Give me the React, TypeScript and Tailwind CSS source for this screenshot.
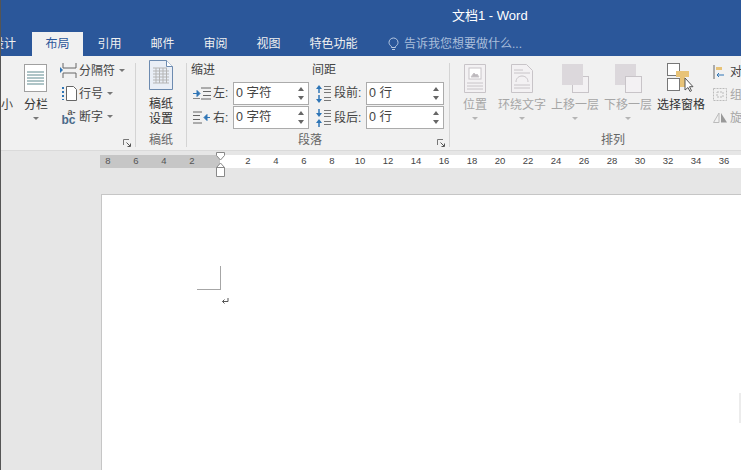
const Caret = ({ c = "#777" }: { c?: string }) => (
  <svg width="6" height="3" viewBox="0 0 6 3" className="shrink-0"><path d="M0 0h6L3 3z" fill={c} /></svg>
);

const Launcher = () => (
  <svg width="9" height="9" viewBox="0 0 9 9" fill="none" stroke="#777" strokeWidth="1">
    <path d="M.5 6V.5H6" /><path d="M3.5 3.5L7 7M7.5 4.500v3h-3" stroke="#555" />
  </svg>
);

const Spinner = ({ text, w }: { text: string; w: string }) => (
  <div className={`flex h-[23px] ${w} items-center justify-between border border-[#ababab] bg-white pl-[2px] pr-[4px] text-[12.5px] text-[#444]`}>
    <span>{text}</span>
    <span className="flex flex-col gap-[5px]">
      <svg width="6" height="4" viewBox="0 0 6 4"><path d="M0 4h6L3 0z" fill="#666" /></svg>
      <svg width="6" height="4" viewBox="0 0 6 4"><path d="M0 0h6L3 4z" fill="#666" /></svg>
    </span>
  </div>
);

const IndentIcon = ({ right }: { right?: boolean }) => (
  <svg width="18" height="15" viewBox="0 0 18 15" fill="none">
    <path d={right ? "M0 2h9M0 5.500h7M0 9.500h7M0 13h9" : "M8 2h10M10 5.500h8M10 9.500h8M8 13h10"} stroke="#666" />
    {right
      ? <path d="M17 7.500h-5M14 4.500l-3 3 3 3z" stroke="#2e75b6" fill="#2e75b6" />
      : <path d="M0 7.500h5M4 4.500l3 3-3 3z" stroke="#2e75b6" fill="#2e75b6" />}
    {!right && <path d="M0 12.500h7" stroke="#888" />}
  </svg>
);

const SpacingIcon = ({ after }: { after?: boolean }) => (
  <svg width="17" height="20" viewBox="0 0 17 20" fill="none">
    <path d="M9 2.500h7M9 5.500h7M9 8.500h7M9 13.500h7M9 16.500h7" stroke="#777" />
    {after ? (
      <>
        <path d="M4 1v6" stroke="#2e75b6" strokeWidth="1.500" /><path d="M1 5h6L4 9z" fill="#2e75b6" />
        <path d="M4 19v-6" stroke="#2e75b6" strokeWidth="1.500" /><path d="M1 15h6L4 11z" fill="#2e75b6" />
      </>
    ) : (
      <>
        <path d="M4 9V3" stroke="#2e75b6" strokeWidth="1.500" /><path d="M1 5h6L4 1z" fill="#2e75b6" />
        <path d="M4 11v6" stroke="#2e75b6" strokeWidth="1.500" /><path d="M1 15h6L4 19z" fill="#2e75b6" />
      </>
    )}
  </svg>
);

const ColumnsIcon = () => (
  <svg width="24" height="29" viewBox="0 0 24 29" fill="none">
    <rect x=".5" y=".5" width="22" height="27" fill="#fff" stroke="#a0a0a0" />
    <path d="M3 8h17M3 11h17M3 14h17M3 17h17M3 20h17" stroke="#5f8a8f" />
  </svg>
);

const PaperIcon = () => (
  <svg width="24" height="30" viewBox="0 0 24 30" fill="none">
    <path d="M.5.500h17l6 6v23H.500z" fill="#e9eef6" stroke="#6d8bb0" />
    <path d="M17.500.500v6h6" fill="#fff" stroke="#6d8bb0" />
    <path d="M4 8h14M4 11h16M4 14h16M4 17h16M4 20h16M4 23h16M7 8v15M10.500 8v15M14 8v15M17.500 8v15" stroke="#b5b5b5" />
  </svg>
);

const DocWrapIcon = ({ wrap }: { wrap?: boolean }) => (
  <svg width="22" height="29" viewBox="0 0 22 29" fill="none" stroke="#c8c4c8">
    <path d={wrap ? "M.5.500h15l6 6v22H.500z" : "M.5.500h21v28H.500z"} fill="#f3f1f3" />
    {wrap ? (
      <path d="M3 6h9M3 9h16M3 21h16M3 24h16M5 18c0-8 12-8 12 0" />
    ) : (
      <>
        <path d="M3 19h16M3 22h16M3 25h16" />
        <rect x="5" y="4" width="12" height="11" fill="#fff" />
        <path d="M7 13l3-4 2 2 1-1 2 3z" fill="#bcb8bc" />
      </>
    )}
  </svg>
);

const LayerIcon = ({ front }: { front?: boolean }) => (
  <svg width="27" height="29" viewBox="0 0 27 29" fill="none">
    {front ? (
      <>
        <rect x="10.500" y="12.500" width="16" height="16" fill="#f3f1f3" stroke="#c8c4c8" />
        <rect x="0" y="0" width="21" height="21" fill="#dcd8dc" />
      </>
    ) : (
      <>
        <rect x="0" y="0" width="21" height="21" fill="#dcd8dc" />
        <rect x="10.500" y="12.500" width="16" height="16" fill="#f3f1f3" stroke="#c8c4c8" />
      </>
    )}
  </svg>
);

const PaneIcon = () => (
  <svg width="28" height="30" viewBox="0 0 28 30" fill="none">
    <rect x=".5" y=".5" width="12" height="12" fill="#fff" stroke="#777" />
    <rect x=".5" y="15.500" width="12" height="12" fill="#fff" stroke="#777" />
    <path d="M9 8h13v6h-4v10h-5V14H9z" fill="#e8c377" />
    <path d="M18 15v12l3-2.500 2 4 1.500-.8-2-4h3.500z" fill="#fff" stroke="#555" />
  </svg>
);

const SmallRow = ({ icon, label }: { icon: React.ReactNode; label: string }) => (
  <div className="flex h-[23px] items-center">
    <span className="flex w-[19px] justify-center">{icon}</span>
    <span className="ml-[1px] text-[12px] text-[#444]">{label}</span>
    <span className="ml-[4px]"><Caret /></span>
  </div>
);

const BigButton = ({ icon, label, w, muted, caret = true }: { icon: React.ReactNode; label: string; w: string; muted?: boolean; caret?: boolean }) => (
  <div className={`flex flex-col items-center ${w}`}>
    <div className="flex h-[33px] items-end">{icon}</div>
    <div className={`mt-[4px] whitespace-nowrap text-[12px] leading-[17px] ${muted ? "text-[#a6a6a6]" : "text-[#333]"}`}>{label}</div>
    {caret && <div className="flex h-[8px] items-center"><Caret c={muted ? "#b5b5b5" : "#777"} /></div>}
  </div>
);

const Sep = () => <div className="my-[3px] w-px shrink-0 bg-[#d4d4d4]" />;

const Group = ({ children, title, w, launcher, pr = "" }: { children: React.ReactNode; title: string; w: string; launcher?: boolean; pr?: string }) => (
  <div className={`flex h-full shrink-0 flex-col ${w}`}>
    <div className="min-h-0 flex-1">{children}</div>
    <div className={`relative flex h-[20px] items-center justify-center text-[12px] text-[#666] ${pr}`}>
      {title}
      {launcher && <span className="absolute bottom-[2px] right-[3px] flex"><Launcher /></span>}
    </div>
  </div>
);

const tabs = [
  { t: "布局", w: "w-[51px]", active: true },
  { t: "引用", w: "w-[53px]" },
  { t: "邮件", w: "w-[53px]" },
  { t: "审阅", w: "w-[53px]" },
  { t: "视图", w: "w-[53px]" },
  { t: "特色功能", w: "w-[77px]" },
];

const rulerDark = ["8", "6", "4", "2"];
const rulerLight = ["2", "4", "6", "8", "10", "12", "14", "16", "18", "20", "22", "24", "26", "28", "30", "32", "34", "36"];

export default function App() {
  return (
    <div className="relative flex h-[470px] w-[741px] flex-col overflow-hidden border-l border-[#555] bg-[#e6e6e6]" style={{ fontFamily: '"Liberation Sans", "Noto Sans CJK SC", sans-serif' }}>
      <header className="flex h-[56px] shrink-0 flex-col bg-[#2b579a] text-white">
        <div className="flex h-[32px] items-center pl-[451px] text-[13px]">文档1 - Word</div>
        <nav className="flex h-[24px] items-stretch text-[12px]">
          <div className="flex w-[31px] items-center justify-end overflow-hidden whitespace-nowrap pr-[16px] text-[#f0f0f0]"><span className="shrink-0">设计</span></div>
          {tabs.map((x) => (
            <div key={x.t} className={`flex items-center justify-center ${x.w} ${x.active ? "bg-[#f1f1f1] text-[#2b579a]" : "text-[#f0f0f0]"}`}>{x.t}</div>
          ))}
          <div className="ml-[16px] flex items-center gap-[5px] text-[#a9bedb]">
            <svg width="11" height="14" viewBox="0 0 11 14" fill="none" stroke="#b8c9e2"><path d="M3.500 9.500C2 8.500 1 7 1 5.500a4.500 4.500 0 0 1 9 0c0 1.500-1 3-2.500 4v1h-4zM4 12.500h3" /></svg>
            告诉我您想要做什么...
          </div>
        </nav>
      </header>

      <section className="flex h-[94px] shrink-0 bg-[#f1f1f1] pt-[4px]">
        <Group title="" w="w-[134px]" launcher>
          <div className="flex">
            <span className="w-[22px] overflow-hidden pt-[37px] text-[12px] leading-[17px] text-[#444]">小</span>
            <BigButton w="w-[26px]" icon={<ColumnsIcon />} label="分栏" />
            <div className="-mt-[1px] ml-[10px] flex flex-col">
              <SmallRow label="分隔符" icon={<svg width="17" height="15" viewBox="0 0 17 15" fill="none"><path d="M3 0v5h13V0M3 15v-5h13v5" stroke="#666" /><path d="M0 4l3 3-3 3z" fill="#2e75b6" /></svg>} />
              <SmallRow label="行号" icon={<svg width="16" height="15" viewBox="0 0 16 15" fill="none"><path d="M5.500.500h7l3 3v11h-10z" fill="#fff" stroke="#666" /><path d="M2 1v13" stroke="#2e75b6" strokeWidth="2" strokeDasharray="2 2" /></svg>} />
              <SmallRow label="断字" icon={<span className="flex flex-col font-bold text-[#4a6a8a]"><span className="pl-[6px] text-[9px] leading-[7px] text-[#555]">a-</span><span className="text-[12px] leading-[9px]">bc</span></span>} />
            </div>
          </div>
        </Group>
        <Sep />
        <Group title="稿纸" w="w-[50px]">
          <div className="flex flex-col items-center">
            <div className="flex h-[33px] items-start"><PaperIcon /></div>
            <div className="mt-[4px] text-center text-[12px] leading-[15px] text-[#333]">稿纸<br />设置</div>
          </div>
        </Group>
        <Sep />
        <Group title="段落" w="w-[262px]" launcher pr="pr-[16px]">
          <div className="flex flex-col pl-[4px]">
            <div className="flex h-[22px] items-start text-[12px] leading-[20px] text-[#444]">
              <span className="w-[121px]">缩进</span><span>间距</span>
            </div>
            <div className="flex flex-col gap-[1px]">
              <div className="flex items-center">
                <span className="ml-[2px] flex"><IndentIcon /></span>
                <span className="ml-[2px] w-[20px] pb-[2px] text-[12px] text-[#444]">左:</span>
                <Spinner w="w-[76px]" text="0 字符" />
                <span className="ml-[6px] flex w-[17px]"><SpacingIcon /></span>
                <span className="w-[34px] pb-[2px] pl-[2px] text-[12px] text-[#444]">段前:</span>
                <Spinner w="w-[78px]" text="0 行" />
              </div>
              <div className="flex items-center">
                <span className="ml-[2px] flex"><IndentIcon right /></span>
                <span className="ml-[2px] w-[20px] text-[12px] text-[#444]">右:</span>
                <Spinner w="w-[76px]" text="0 字符" />
                <span className="ml-[6px] flex w-[17px]"><SpacingIcon after /></span>
                <span className="w-[34px] pl-[2px] text-[12px] text-[#444]">段后:</span>
                <Spinner w="w-[78px]" text="0 行" />
              </div>
            </div>
          </div>
        </Group>
        <Sep />
        <Group title="排列" w="w-[326px]">
          <div className="flex">
            <BigButton muted w="w-[50px]" icon={<DocWrapIcon />} label="位置" />
            <BigButton muted w="w-[44px]" icon={<DocWrapIcon wrap />} label="环绕文字" />
            <BigButton muted w="w-[48px] ml-[7px]" icon={<LayerIcon front />} label="上移一层" />
            <BigButton muted w="w-[48px] ml-[5px]" icon={<LayerIcon />} label="下移一层" />
            <BigButton w="w-[48px] ml-[5px]" icon={<PaneIcon />} label="选择窗格" caret={false} />
            <div className="ml-[8px] flex flex-col text-[12px]">
              <div className="flex h-[23px] items-center gap-[5px] text-[#444]">
                <svg width="12" height="14" viewBox="0 0 12 14" fill="none"><path d="M1 0v14" stroke="#666" /><path d="M3 2h6v3H3z" fill="#e8c377" /><path d="M11 10H4M6 8l-2 2 2 2" stroke="#2e75b6" /></svg>对
              </div>
              <div className="flex h-[23px] items-center gap-[3px] text-[#a6a6a6]">
                <svg width="14" height="13" viewBox="0 0 14 13" fill="none" stroke="#bbb" strokeDasharray="2 1"><rect x=".5" y=".5" width="13" height="12" /><rect x="4" y="4" width="6" height="5" /></svg>组
              </div>
              <div className="flex h-[23px] items-center gap-[3px] text-[#a6a6a6]">
                <svg width="14" height="11" viewBox="0 0 14 11"><path d="M.5 10.500L6 1v9.500z" fill="none" stroke="#bbb" /><path d="M8 1l6 9.500H8z" fill="#999" /></svg>旋
              </div>
            </div>
          </div>
        </Group>
      </section>

      <div className="h-px shrink-0 bg-[#dadada]" />

      <main className="flex min-h-0 flex-1 flex-col">
        <div className="ml-[99px] mt-[4px] flex h-[13px] shrink-0 items-center overflow-hidden text-[9.500px] text-[#555]">
          <div className="flex h-full w-[120px] shrink-0 items-center gap-[22px] bg-[#c6c6c6] pl-[5px]">
            {rulerDark.map((n, i) => <span key={i} className="w-[6px] text-center">{n}</span>)}
          </div>
          <div className="flex h-full flex-1 items-center bg-white">
            {rulerLight.map((n, i) => <span key={i} className="w-[28px] shrink-0 text-center text-[#444] first:ml-[14px]">{n}</span>)}
          </div>
        </div>
        <div className="ml-[100px] mt-[26px] min-h-0 flex-1 border-l border-t border-[#c6c6c6] bg-white">
          <div className="ml-[95px] mt-[71px] h-[24px] w-[24px] border-b border-r border-[#a6a6a6]" />
          <div className="ml-[119px] mt-[7px]">
            <svg width="8" height="8" viewBox="0 0 8 8" fill="none" stroke="#555"><path d="M7 1v3.500H1.500M3.500 2.500l-2 2 2 2" /></svg>
          </div>
        </div>
      </main>
      <div className="pointer-events-none absolute left-[215px] top-[152px]">
        <svg width="10" height="25" viewBox="0 0 10 25" fill="#fff" stroke="#888"><path d="M.5.500h8v3L4.500 8 .5 3.500z" /><path d="M4.500 11l4 4.500h-8z" /><path d="M.5 15.500h8v9h-8z" /></svg>
      </div>
      <div className="absolute bottom-[47px] right-0 h-[30px] w-[2px] bg-[#ececec]" />
    </div>
  );
}
